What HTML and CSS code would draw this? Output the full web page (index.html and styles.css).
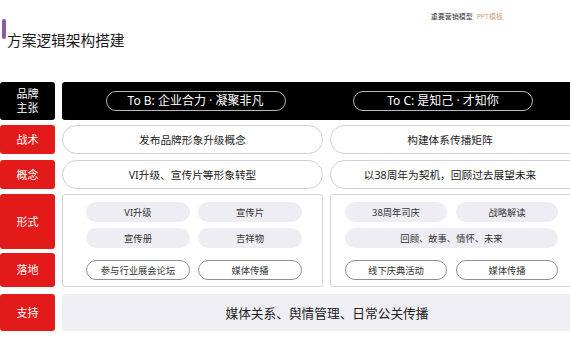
FILE: index.html
```html
<!DOCTYPE html>
<html lang="zh-CN">
<head>
<meta charset="utf-8">
<title>方案逻辑架构搭建</title>
<link rel="stylesheet" href="styles.css">
</head>
<body>
<div class="slide">
  <header class="head">
    <div class="title-group">
      <span class="bar"></span>
      <h1 class="title">方案逻辑架构搭建</h1>
    </div>
    <div class="tag">重要营销模型 <span class="tag-accent">PPT模板</span></div>
  </header>

  <main class="board">
    <div class="row row-brand">
      <div class="label label-dark">品牌<br>主张</div>
      <div class="brand-bar">
        <div class="brand-half brand-half-left"><span class="brand-pill">To B: 企业合力 · 凝聚非凡</span></div>
        <div class="brand-half brand-half-right"><span class="brand-pill">To C: 是知己 · 才知你</span></div>
      </div>
    </div>

    <div class="row row-line">
      <div class="label">战术</div>
      <div class="line-pill">发布品牌形象升级概念</div>
      <div class="line-pill line-pill-right">构建体系传播矩阵</div>
    </div>

    <div class="row row-line row-concept">
      <div class="label">概念</div>
      <div class="line-pill">VI升级、宣传片等形象转型</div>
      <div class="line-pill line-pill-right">以38周年为契机，回顾过去展望未来</div>
    </div>

    <div class="row row-form">
      <div class="label-stack">
        <div class="label label-form">形式</div>
        <div class="label label-land">落地</div>
      </div>
      <div class="form-box form-box-left">
        <div class="chip-grid">
          <span class="chip">VI升级</span>
          <span class="chip">宣传片</span>
          <span class="chip">宣传册</span>
          <span class="chip">吉祥物</span>
        </div>
        <div class="chip-grid chip-grid-land">
          <span class="chip chip-outline">参与行业展会论坛</span>
          <span class="chip chip-outline">媒体传播</span>
        </div>
      </div>
      <div class="form-box form-box-right">
        <div class="chip-grid">
          <span class="chip">38周年司庆</span>
          <span class="chip">战略解读</span>
          <span class="chip chip-wide">回顾、故事、情怀、未来</span>
        </div>
        <div class="chip-grid chip-grid-land">
          <span class="chip chip-outline">线下庆典活动</span>
          <span class="chip chip-outline">媒体传播</span>
        </div>
      </div>
    </div>

    <div class="row row-support">
      <div class="label">支持</div>
      <div class="support-bar">媒体关系、舆情管理、日常公关传播</div>
    </div>
  </main>
</div>
</body>
</html>
```

FILE: styles.css
```css
* {
  box-sizing: border-box;
}

html, body {
  margin: 0;
  padding: 0;
  background: #ffffff;
}

body {
  width: 570px;
  height: 360px;
  overflow: hidden;
  font-family: "Noto Sans", "Noto Sans CJK SC", sans-serif;
  color: #222;
}

.slide {
  width: 600px;
}

/* header */
.head {
  height: 82px;
  display: flex;
  justify-content: space-between;
  align-items: flex-start;
  width: 570px;
}

.title-group {
  display: flex;
  align-items: flex-start;
}

.bar {
  display: block;
  width: 4px;
  height: 20px;
  margin-top: 19px;
  margin-left: 2px;
  border-radius: 2px;
  background: #8a5c9c;
}

.title {
  margin: 32px 0 0 1px;
  font-size: 14.7px;
  line-height: 17px;
  font-weight: 400;
  color: #1a1a1a;
}

.tag {
  margin-top: 12px;
  margin-right: 67px;
  font-size: 7px;
  line-height: 10px;
  color: #333;
}

.tag-accent {
  color: #d2a373;
  margin-left: 2px;
}

/* board */
.board {
  width: 600px;
  display: flex;
  flex-direction: column;
  gap: 5px;
}

.row {
  display: grid;
  grid-template-columns: 55px 261px 1fr;
  column-gap: 7px;
}

.row-brand {
  height: 38px;
}

.row-line {
  height: 29px;
}

.row-concept {
  margin-top: 1px;
}

.row-form {
  height: 93px;
}

.row-support {
  height: 37px;
  margin-top: 2px;
}

.label {
  display: flex;
  align-items: center;
  justify-content: center;
  border-radius: 3px;
  background: #e21a1a;
  color: #fff;
  font-size: 11px;
  line-height: 14px;
  text-align: center;
}

.label-dark {
  background: #000;
}

.label-stack {
  display: flex;
  flex-direction: column;
  gap: 4px;
}

.label-form {
  height: 55px;
}

.label-land {
  height: 34px;
}

/* brand row */
.brand-bar {
  grid-column: 2 / 4;
  background: #000;
  border-radius: 3px;
  display: grid;
  grid-template-columns: 261px 1fr;
  column-gap: 7px;
}

.brand-half {
  display: flex;
  align-items: center;
  justify-content: center;
}

.brand-half-left {
  padding-left: 6px;
}

.brand-half-right {
  padding-right: 44px;
}

.brand-pill {
  width: 180px;
  height: 20px;
  border: 1px solid #b9b9b9;
  border-radius: 10px;
  color: #fff;
  font-size: 12px;
  line-height: 18px;
  text-align: center;
}

/* line pills */
.line-pill {
  display: flex;
  align-items: center;
  justify-content: center;
  border: 1px solid #d2cbdd;
  border-radius: 15px;
  background: #fff;
  font-size: 10.7px;
  color: #222;
}

.line-pill-right {
  padding-right: 30px;
}

/* form boxes */
.form-box {
  border: 1px solid #d4d4d4;
  border-radius: 3px;
  background: #fff;
  padding-top: 7px;
}

.form-box-left {
  padding-left: 23px;
}

.form-box-right {
  padding-left: 14px;
}

.chip-grid {
  display: grid;
  grid-template-columns: 104px 104px;
  grid-auto-rows: 20px;
  column-gap: 8px;
  row-gap: 6px;
}

.form-box-right .chip-grid {
  grid-template-columns: 102px 102px;
  column-gap: 9px;
}

.chip-grid-land {
  margin-top: 12px;
}

.chip {
  display: flex;
  align-items: center;
  justify-content: center;
  border-radius: 10px;
  background: #eeedf3;
  font-size: 9.3px;
  color: #333;
}

.chip-wide {
  grid-column: 1 / 3;
}

.chip-outline {
  background: #fff;
  border: 1px solid #8f8f8f;
}

/* support */
.support-bar {
  grid-column: 2 / 4;
  display: flex;
  align-items: center;
  justify-content: center;
  padding-right: 8px;
  border-radius: 3px;
  background: #efeef3;
  font-size: 12.7px;
  color: #222;
}
```
